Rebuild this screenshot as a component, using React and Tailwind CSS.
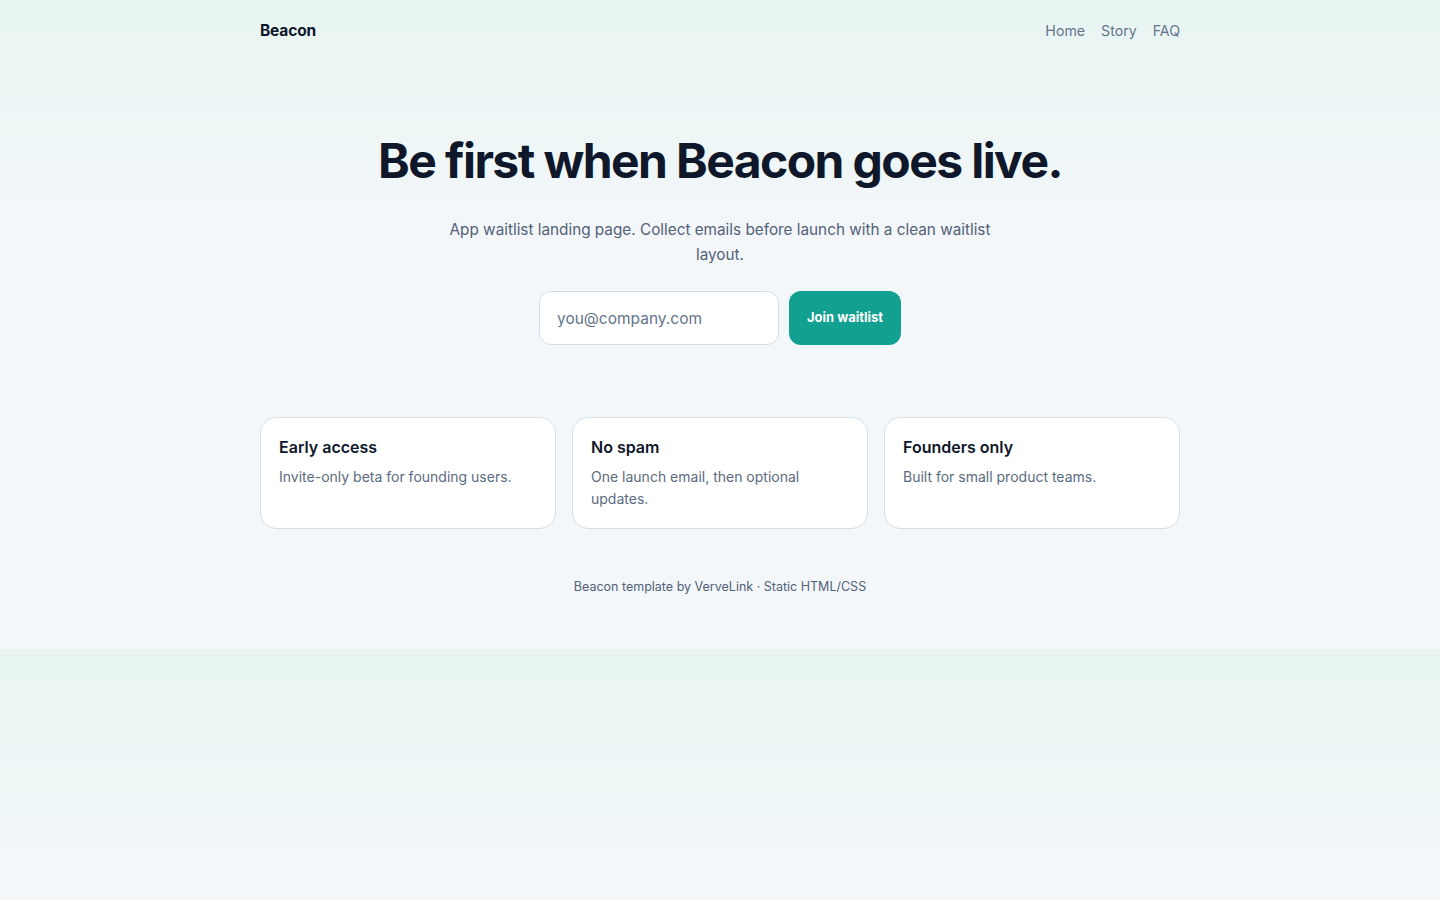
export default function App() {
  const cards = [
    { t: "Early access", d: "Invite-only beta for founding users." },
    { t: "No spam", d: "One launch email, then optional updates." },
    { t: "Founders only", d: "Built for small product teams." },
  ];
  return (
    <div
      className="min-h-screen bg-[linear-gradient(180deg,#e8f5f2_0%,#f4f7fa_40%)] bg-[length:100%_649px] bg-repeat font-['Inter','Noto_Sans',sans-serif]"
    >
      <div className="mx-auto w-[920px] pb-[52px]">
        <header className="flex h-[62px] items-center justify-between">
          <div className="text-[15.5px] font-bold tracking-[-0.01em] text-[#0f172a]">Beacon</div>
          <nav className="flex items-center gap-4 text-[14.2px] text-[#64748b]">
            <a>Home</a>
            <a>Story</a>
            <a>FAQ</a>
          </nav>
        </header>
        <main className="flex flex-col items-center">
          <h1 className="mt-[69px] text-center text-[48px] font-bold leading-[60px] tracking-[-0.033em] text-[#0f172a]">
            Be first when Beacon goes live.
          </h1>
          <p className="mt-[26px] max-w-[560px] text-center text-[15.3px] leading-[25px] text-[#536178]">
            App waitlist landing page. Collect emails before launch with a clean waitlist layout.
          </p>
          <form className="mt-[24px] flex gap-[10px]" onSubmit={(e) => e.preventDefault()}>
            <input
              className="h-[54px] w-[240px] rounded-[12px] border border-[#d3dde6] bg-white px-[17px] text-[15.5px] text-[#0f172a] outline-none placeholder:text-[#64748b]"
              placeholder="you@company.com"
            />
            <button className="h-[54px] w-[112px] rounded-[12px] bg-[#12a091] text-[13px] font-bold text-white">
              Join waitlist
            </button>
          </form>
          <section className="mt-[72px] grid w-full grid-cols-3 gap-4">
            {cards.map((c) => (
              <div key={c.t} className="h-[112px] rounded-[16px] border border-[#d5e0e8] bg-white px-[18px] pt-[18px]">
                <h3 className="text-[16px] font-semibold leading-[22px] text-[#0f172a]">{c.t}</h3>
                <p className="mt-[8px] text-[14px] leading-[22px] text-[#5b6b80]">{c.d}</p>
              </div>
            ))}
          </section>
          <footer className="mt-[48px] text-center text-[12.5px] leading-[20px] text-[#526177]">
            Beacon template by VerveLink · Static HTML/CSS
          </footer>
        </main>
      </div>
    </div>
  );
}
